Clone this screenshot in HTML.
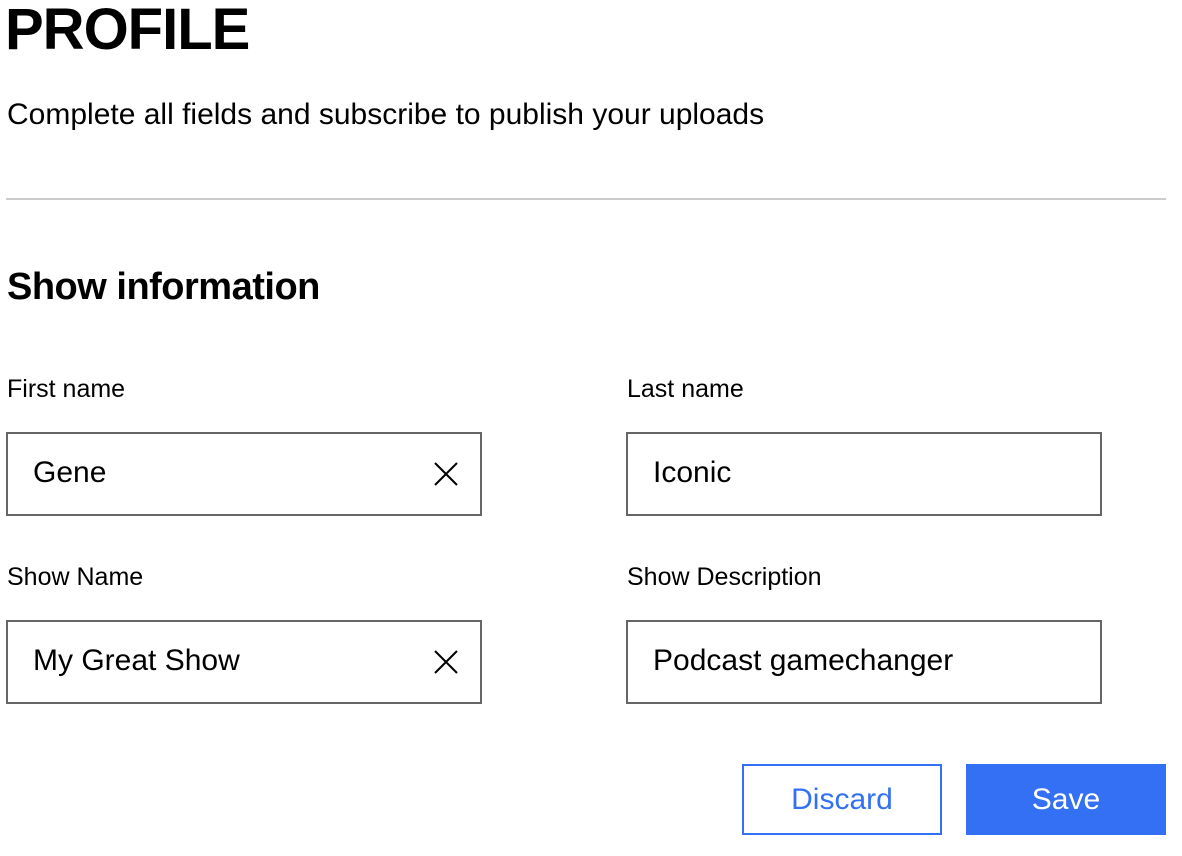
<!DOCTYPE html>
<html><head><style>
body{margin:0;background:#fff;font-family:"Liberation Sans",sans-serif;color:#000;width:1182px;height:856px;overflow:hidden;position:relative}
.a{position:absolute;white-space:nowrap}
.inp{position:absolute;width:472px;height:80px;border:2px solid #666;box-sizing:content-box}
.inp span{position:absolute;left:25px;top:22px;font-size:30px}
.x{position:absolute;left:426px;top:28px}
.lbl{font-size:25px}
</style></head><body>
<div class="a" style="left:5px;top:-4px;font-size:58px;font-weight:bold;letter-spacing:-1px">PROFILE</div>
<div class="a" style="left:7px;top:98px;font-size:30px">Complete all fields and subscribe to publish your uploads</div>
<div class="a" style="left:6px;top:198px;width:1160px;height:2px;background:#ccc"></div>
<div class="a" style="left:7px;top:266px;font-size:38px;font-weight:bold;letter-spacing:-0.5px">Show information</div>
<div class="a lbl" style="left:7px;top:375px">First name</div>
<div class="a lbl" style="left:627px;top:375px">Last name</div>
<div class="inp" style="left:6px;top:432px"><span>Gene</span><svg class="x" width="24" height="24" viewBox="0 0 24 24"><path d="M1 1L23 23M23 1L1 23" stroke="#000" stroke-width="2"/></svg></div>
<div class="inp" style="left:626px;top:432px"><span>Iconic</span></div>
<div class="a lbl" style="left:7px;top:563px">Show Name</div>
<div class="a lbl" style="left:627px;top:563px">Show Description</div>
<div class="inp" style="left:6px;top:620px"><span>My Great Show</span><svg class="x" width="24" height="24" viewBox="0 0 24 24"><path d="M1 1L23 23M23 1L1 23" stroke="#000" stroke-width="2"/></svg></div>
<div class="inp" style="left:626px;top:620px"><span>Podcast gamechanger</span></div>
<div class="a" style="left:742px;top:764px;width:196px;height:67px;border:2px solid #3370f4;color:#3370f4;font-size:30px;text-align:center;line-height:67px">Discard</div>
<div class="a" style="left:966px;top:764px;width:200px;height:71px;background:#3370f4;color:#fff;font-size:30px;text-align:center;line-height:71px">Save</div>
</body></html>
